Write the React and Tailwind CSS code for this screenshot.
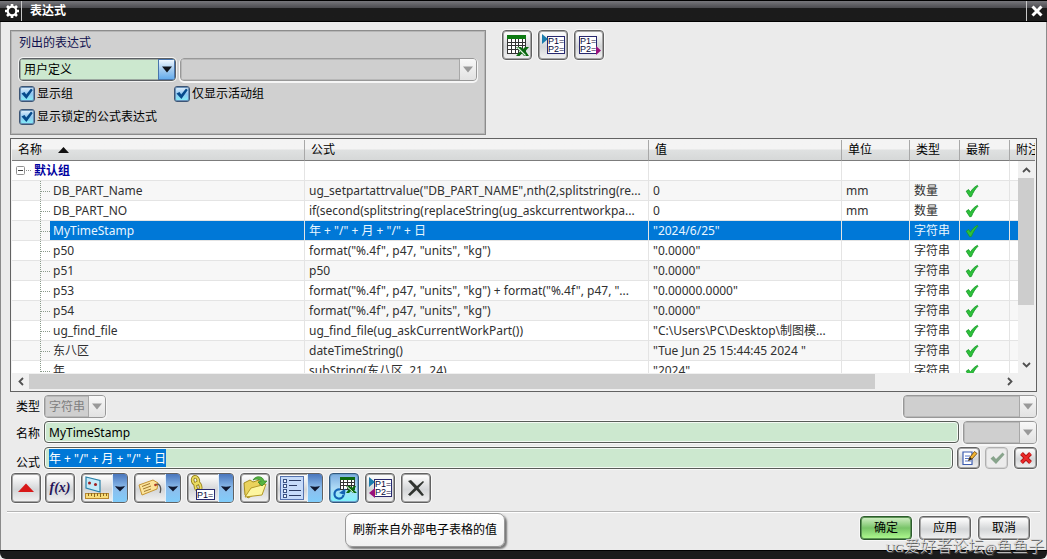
import { useEffect, useRef } from "react";

const COLUMNS = [
  { label: "名称", width: "w-[293px]" },
  { label: "公式", width: "" },
  { label: "值", width: "w-[193px]" },
  { label: "单位", width: "w-[68px]" },
  { label: "类型", width: "w-[50px]" },
  { label: "最新", width: "w-[50px]" },
  { label: "附注", width: "w-[25px]" },
];

const ROWS = [
  { name: "DB_PART_Name", formula: 'ug_setpartattrvalue("DB_PART_NAME",nth(2,splitstring(re...', value: "0", unit: "mm", type: "数量" },
  { name: "DB_PART_NO", formula: "if(second(splitstring(replaceString(ug_askcurrentworkpa...", value: "0", unit: "mm", type: "数量" },
  { name: "MyTimeStamp", formula: '年 + "/" + 月 + "/" + 日', value: '"2024/6/25"', unit: "", type: "字符串", selected: true },
  { name: "p50", formula: 'format("%.4f", p47, "units", "kg")', value: '"0.0000"', unit: "", type: "字符串" },
  { name: "p51", formula: "p50", value: '"0.0000"', unit: "", type: "字符串" },
  { name: "p53", formula: 'format("%.4f", p47, "units", "kg") + format("%.4f", p47, "...', value: '"0.00000.0000"', unit: "", type: "字符串" },
  { name: "p54", formula: 'format("%.4f", p47, "units", "kg")', value: '"0.0000"', unit: "", type: "字符串" },
  { name: "ug_find_file", formula: "ug_find_file(ug_askCurrentWorkPart())", value: '"C:\\Users\\PC\\Desktop\\制图模...', unit: "", type: "字符串" },
  { name: "东八区", formula: "dateTimeString()", value: '"Tue Jun 25 15:44:45 2024 "', unit: "", type: "字符串" },
  { name: "年", formula: "subString(东八区, 21, 24)", value: '"2024"', unit: "", type: "字符串" },
];

const glass =
  "border border-[#626262] rounded-[4px] bg-linear-to-b from-[#fafafa] from-10% via-[#d4d6d8] via-55% to-[#f2f2f2] shadow-[inset_0_0_0_1px_#a4a4a4,0_0_0_1px_#f8f8f8]";

const field =
  "min-w-0 flex-1 h-[22px] rounded-[4px] border border-[#585c58] bg-[#cce8cf] px-1 leading-[18px] shadow-[inset_0_0_0_1px_#f4faf4,0_0_0_1px_#f8f8f8]";

function CheckMark() {
  return (
    <svg width="14" height="14" viewBox="0 0 14 14" className="block">
      <path d="M1.2 7.2 L3.6 5.6 L5.4 8.2 C7 5.4 9.2 3 12.4 1.4 L13 2.2 C10 5 8 8.4 6.4 12.4 L4.8 12.8 Z" fill="#2ec23a" stroke="#189a2b" strokeWidth="0.9" strokeLinejoin="round" />
    </svg>
  );
}

function Arrow({ color }) {
  return (
    <svg width="10" height="7" viewBox="0 0 10 7" className="block">
      <path d="M0 0.5 H10 L5 6.5 Z" fill={color} />
    </svg>
  );
}

function Checkbox({ label }) {
  return (
    <label className="flex items-center gap-[2px]">
      <span className="grid">
        <input type="checkbox" defaultChecked className="col-start-1 row-start-1 size-4 appearance-none rounded-[3px] border border-[#3c5474] bg-linear-to-b from-[#e6f2fc] via-[#8fc6f0] to-[#7ff0f8] shadow-[inset_0_0_0_1px_#6890b8]" />
        <svg width="16" height="16" viewBox="0 0 16 16" className="pointer-events-none col-start-1 row-start-1">
          <path d="M2.5 7.5 L5.5 6 L7.2 8.6 L12 2.5 L13.8 4 L7.4 13 Z" fill="#064a8c" />
        </svg>
      </span>
      {label}
    </label>
  );
}

function DisabledSelect({ label, text, className }) {
  return (
    <span className={`grid h-[23px] overflow-hidden rounded-[4px] border border-[#989898] bg-[#cfcfcf] shadow-[0_1px_0_1px_#f6f6f6] ${className}`}>
      <select disabled aria-label={label} className="col-start-1 row-start-1 w-full appearance-none pl-1 leading-[21px] text-[#808080] shadow-[inset_0_0_0_1px_#b8b8b8]">
        <option>{text}</option>
      </select>
      <span className="pointer-events-none col-start-1 row-start-1 flex w-[17px] items-center justify-center self-stretch justify-self-end border-l border-[#a8a8a8] bg-linear-to-b from-[#f8f8f8] to-[#e2e2e2]">
        <Arrow color="#999999" />
      </span>
    </span>
  );
}

function ToolButton({ label, children, active }) {
  return (
    <button
      type="button"
      aria-label={label}
      className={
        active
          ? "flex size-[30px] items-center justify-center rounded-[4px] border border-[#34587c] bg-linear-to-b from-[#7cacdf] via-[#aedaf5] to-[#7af4fc] shadow-[inset_0_0_0_1px_#6ba0cc,0_0_0_1px_#f8f8f8]"
          : `flex size-[30px] items-center justify-center ${glass}`
      }
    >
      {children}
    </button>
  );
}

function SplitButton({ label, children }) {
  return (
    <span className={`flex h-[30px] w-[47px] overflow-hidden ${glass}`}>
      <button type="button" aria-label={label} className="flex flex-1 items-center justify-center">
        {children}
      </button>
      <button type="button" aria-label={`${label}菜单`} className="flex w-[15px] items-center justify-center border-l border-[#dfeefa] bg-linear-to-b from-[#4a76bc] via-[#8dbdec] to-[#80ccfa]">
        <svg width="10" height="7" viewBox="0 0 10 7">
          <path d="M0 1 C3 2 7 2 10 1 C8 4 6 5 5 6.4 C4 5 2 4 0 1 Z" fill="#101830" />
        </svg>
      </button>
    </span>
  );
}

function SheetIcon() {
  return (
    <svg width="26" height="26" viewBox="0 0 26 26">
      <rect x="3" y="3" width="19" height="4" fill="#0d7a12" />
      <rect x="3" y="7" width="19" height="15" fill="#fff" />
      <path d="M3.5 7V22 M7.5 7V22 M11.5 7V22 M14.5 7V22 M18.5 7V22 M21.5 7V22 M3 10.5H22 M3 13.5H22 M3 17.5H22 M3 21.5H22" stroke="#333" fill="none" />
      <path d="M12 15 H17 L19 17 L21 15 H25 L21.5 19 L25 24 H20 L18 21.5 L15.5 24 H12 L16 19.5 Z" fill="#0b6a10" />
      <path d="M13.5 15.5 L21.5 23.5" stroke="#e4f4e4" strokeWidth="1.1" />
    </svg>
  );
}

function ParamIcon({ left, right, leftLow }) {
  return (
    <svg width="26" height="26" viewBox="0 0 26 26">
      <rect x={right ? 3.5 : 7.5} y="4.5" width="17" height="17" fill="#fff" stroke="#28286e" />
      <text x={right ? 4 : 8} y="12" fontSize="9" fontFamily="Liberation Sans, sans-serif" fill="#08083a">P1=</text>
      <text x={right ? 4 : 8} y="20" fontSize="9" fontFamily="Liberation Sans, sans-serif" fill="#08083a">P2=</text>
      {left && <path d="M2 2 L8 7 L2 12 Z" fill="#1c7cac" />}
      {right && <path d="M20 14 L25 18.5 L20 23 Z" fill="#98107c" />}
      {leftLow && <path d="M8 13 L2 18 L8 23 Z" fill="#98107c" />}
    </svg>
  );
}

function MeasureIcon() {
  return (
    <svg width="28" height="26" viewBox="0 0 28 26">
      <path d="M3 2 L17 5.5 V17 L3 13 Z" fill="#c4eaf8" stroke="#2880a8" strokeWidth="1.2" />
      <circle cx="6.5" cy="8" r="1.5" fill="#a02020" />
      <circle cx="12.5" cy="9.5" r="1.5" fill="#a02020" />
      <rect x="2.5" y="18.5" width="23" height="5" fill="#f8dc78" stroke="#b88830" />
      <path d="M5.5 18V21 M8.5 18V21 M11.5 18V22 M14.5 18V21 M17.5 18V22 M20.5 18V21 M23.5 18V21" stroke="#8c6820" />
    </svg>
  );
}

function TagIcon() {
  return (
    <svg width="28" height="26" viewBox="0 0 28 26">
      <path d="M3 10 L17 5 L22 8 L21 14 L6 20 Z" fill="#fbe39a" stroke="#c49434" />
      <path d="M6 11.5 L14 8.5 M7 14 L15 11 M8 16.5 L15 14" stroke="#a07830" />
      <path d="M19 10 C23 7 26 12 24 18" stroke="#555" fill="none" strokeWidth="1.3" />
      <circle cx="19.5" cy="10" r="1.3" fill="#b43a20" />
    </svg>
  );
}

function LinkParamIcon() {
  return (
    <svg width="28" height="28" viewBox="0 0 28 28">
      <g fill="none" stroke="#96801c" strokeWidth="3.6">
        <ellipse cx="6.5" cy="6.5" rx="2.8" ry="3.8" transform="rotate(-15 6.5 6.5)" />
        <ellipse cx="9" cy="12.5" rx="2.5" ry="4" transform="rotate(-15 9 12.5)" />
      </g>
      <g fill="none" stroke="#eadb60" strokeWidth="1.8">
        <ellipse cx="6.5" cy="6.5" rx="2.8" ry="3.8" transform="rotate(-15 6.5 6.5)" />
        <ellipse cx="9" cy="12.5" rx="2.5" ry="4" transform="rotate(-15 9 12.5)" />
      </g>
      <rect x="7.5" y="15.5" width="18" height="10" fill="#fff" stroke="#28286e" />
      <text x="8" y="24" fontSize="9" fontFamily="Liberation Sans, sans-serif" fill="#08083a">P1=</text>
    </svg>
  );
}

function FolderIcon() {
  return (
    <svg width="26" height="26" viewBox="0 0 26 26">
      <path d="M2 8 L8 5 L11 7 L17 5 L19 16 L6 23 L3 20 Z" fill="#ead25c" stroke="#a48c20" />
      <path d="M3 22 L9 13 L24 9 L20 20 Z" fill="#fdf6a0" stroke="#b49a28" />
      <path d="M11 5 C14 0 21 1 22 6 L25 6 L20 11 L16 7 L19 6.5 C18 4 14 3.5 11 5 Z" fill="#56b440" stroke="#2c8420" strokeWidth="0.7" />
    </svg>
  );
}

function ListIcon() {
  return (
    <svg width="28" height="26" viewBox="0 0 28 26">
      <rect x="2.5" y="1.5" width="23" height="23" fill="#c6dbfa" stroke="#5674b0" />
      {[5, 10, 15, 20].map((y) => (
        <g key={y}>
          <rect x="5.5" y={y - 0.5} width="3" height="3" fill="#e8f2ff" stroke="#3c5484" />
          <path d={`M11 ${y + 0.5} H${y === 10 ? 19 : 23}`} stroke="#2c3c64" />
        </g>
      ))}
    </svg>
  );
}

function RefreshSheetIcon() {
  return (
    <svg width="26" height="26" viewBox="0 0 26 26">
      <rect x="9" y="2" width="15" height="3" fill="#0d6a12" />
      <rect x="9" y="5" width="15" height="10" fill="#fff" />
      <path d="M9.5 5V15 M12.5 5V15 M16.5 5V15 M20.5 5V15 M23.5 5V15 M9 7.5H24 M9 10.5H24 M9 14.5H20" stroke="#333" fill="none" />
      <path d="M15 11 H19 L21 13 L22.5 11 H25 L23 15 L26 18 H22 L20 16 L18 18 H15 L18 14 Z" fill="#0b6a10" />
      <path d="M16 11.5 L22.5 17.5" stroke="#e4f4e4" />
      <path d="M9 14.5 A4.6 4.6 0 1 0 12.6 20" stroke="#1464b4" fill="none" strokeWidth="2.2" />
      <path d="M8 18 L14.5 13.5 L14 20 Z" fill="#1464b4" />
    </svg>
  );
}

function FormulaInput() {
  const ref = useRef(null);
  useEffect(() => {
    ref.current.focus();
    ref.current.select();
  }, []);
  return (
    <input
      id="formula"
      ref={ref}
      defaultValue={'年 + "/" + 月 + "/" + 日'}
      className={`outline-none selection:bg-[#0078d7] selection:text-white ${field}`}
    />
  );
}

export default function App() {
  return (
    <div className="flex min-h-screen flex-col bg-[#ebebeb] font-['Noto_Sans','Noto_Sans_CJK_SC',sans-serif] text-[12px] leading-[18px] text-black">
      <header className="flex h-[22px] items-stretch border-y border-black bg-linear-to-b from-[#77777c] from-0% via-[#4c4c50] via-34% to-[#1b1b1b] to-36% text-white">
        <span className="flex w-[22px] items-center justify-center border-r border-[#c8c8c8] pl-[2px]">
          <svg width="16" height="16" viewBox="0 0 16 16">
            <g stroke="#fff" strokeWidth="2.6">
              <path d="M8 1V4 M8 12V15 M1 8H4 M12 8H15 M3 3L5 5 M11 11L13 13 M13 3L11 5 M3 13L5 11" />
              <circle cx="8" cy="8" r="4.3" fill="#1b1b1b" strokeWidth="2.2" />
            </g>
          </svg>
        </span>
        <h1 className="flex-1 pl-2 font-bold leading-[20px]">表达式</h1>
        <button type="button" aria-label="关闭" className="flex w-[21px] items-center justify-center border-l border-[#c8c8c8]">
          <svg width="14" height="14" viewBox="0 0 14 14">
            <path d="M2.5 2.5 L11.5 11.5 M11.5 2.5 L2.5 11.5" stroke="#fff" strokeWidth="3" />
          </svg>
        </button>
      </header>

      <main className="flex flex-1 flex-col border-x border-[#8a8a8a] px-[9px] pt-2">
        <div className="flex gap-4">
          <fieldset className="flex w-[476px] flex-col border border-[#8c8c8c] bg-[#d0d0d0] px-2 pb-2 pt-[2px] shadow-[inset_0_0_0_1px_#b6b6b6]">
            <legend className="float-left w-full leading-[20px] text-[#10104e]">列出的表达式</legend>
            <div className="mb-[3px] mt-[5px] flex gap-1">
              <span className="grid h-[23px] w-[157px] overflow-hidden rounded-[4px] border border-[#5c6064] bg-[#cce8cf] shadow-[0_0_0_1px_#f2f2f2]">
                <select aria-label="列出的表达式" className="col-start-1 row-start-1 w-full appearance-none pl-1 leading-[21px] shadow-[inset_0_0_0_1px_#9ca8a0]">
                  <option>用户定义</option>
                </select>
                <span className="pointer-events-none col-start-1 row-start-1 flex w-[17px] items-center justify-center self-stretch justify-self-end border border-[#4874ac] bg-linear-to-b from-[#f0f8ff] via-[#a4ccf0] to-[#64acec]">
                  <Arrow color="#10141c" />
                </span>
              </span>
              <DisabledSelect label="过滤器" text="" className="flex-1" />
            </div>
            <div className="grid grid-cols-[155px_auto] gap-y-1 leading-[19px]">
              <Checkbox label="显示组" />
              <Checkbox label="仅显示活动组" />
              <Checkbox label="显示锁定的公式表达式" />
            </div>
          </fieldset>
          <div className="flex gap-[6px]">
            <ToolButton label="电子表格编辑"><SheetIcon /></ToolButton>
            <ToolButton label="导入表达式"><ParamIcon left /></ToolButton>
            <ToolButton label="导出表达式"><ParamIcon right /></ToolButton>
          </div>
        </div>

        <section className="mt-[3px] border border-[#626262] bg-[#f2f2f2] p-px">
          <div className="grid grid-cols-[minmax(0,1fr)_17px] grid-rows-[21px_212px] overflow-hidden bg-white">
            <div className="col-span-2 col-start-1 row-span-2 row-start-1 overflow-hidden">
              <table className="w-full table-fixed border-separate border-spacing-0 text-[#303030]">
                <thead>
                  <tr className="h-[21px] text-black">
                    {COLUMNS.map((c) => (
                      <th key={c.label} scope="col" className={`${c.width} overflow-hidden whitespace-nowrap border-b border-r border-b-[#7c7c7c] border-r-[#a8a8a8] bg-linear-to-b from-[#f4f4f4] from-45% via-[#dfe1e1] via-50% to-[#d6d8d8] p-0 pl-[6px] text-left font-normal leading-[20px] last:border-r-0`}>
                        {c.label === "名称" ? (
                          <span className="flex items-center gap-4">
                            名称
                            <svg width="11" height="6" viewBox="0 0 11 6"><path d="M0 6 L5.5 0 L11 6 Z" fill="#101010" /></svg>
                          </span>
                        ) : c.label}
                      </th>
                    ))}
                  </tr>
                </thead>
                <tbody>
                  <tr className="h-5">
                    <th scope="rowgroup" className="border-b border-r border-[#e4e4e4] p-0 text-left font-bold leading-[19px] text-[#0000a0]">
                      <span className="flex items-center gap-[3px] pl-1">
                        <svg width="15" height="9" viewBox="0 0 15 9">
                          <rect x="0.5" y="0.5" width="8" height="8" rx="1" fill="#fff" stroke="#909090" />
                          <path d="M2 4.5H7" stroke="#404040" />
                          <path d="M10 4.5H15" stroke="#909090" strokeDasharray="1 1" />
                        </svg>
                        默认组
                      </span>
                    </th>
                    {COLUMNS.slice(1).map((c) => <td key={c.label} className="border-b border-r border-[#e4e4e4] p-0" />)}
                  </tr>
                  {ROWS.map((r, i) => {
                    const tone = r.selected ? "bg-[#0078d7] text-[#e8f6ff]" : i % 2 === 0 ? "bg-[#f7f7f7]" : "bg-white";
                    const cell = `overflow-hidden whitespace-nowrap border-b border-r border-[#e4e4e4] p-0 pl-1 ${tone}`;
                    return (
                      <tr key={r.name} className="h-5 leading-[19px]">
                        <td className="border-b border-r border-[#e4e4e4] p-0">
                          <span className={`flex ${i % 2 === 0 ? "bg-[#f7f7f7]" : "bg-white"}`}>
                            <svg width="38" height="19" viewBox="0 0 38 19" className="shrink-0">
                              <path d="M28.5 0V19 M29 10.5H38" stroke="#8a9a8a" strokeDasharray="1 1" fill="none" />
                            </svg>
                            <span className={`flex-1 pl-[3px] ${tone}`}>{r.name}</span>
                          </span>
                        </td>
                        <td className={cell}>{r.formula}</td>
                        <td className={cell}>{r.value}</td>
                        <td className={cell}>{r.unit}</td>
                        <td className={cell}>{r.type}</td>
                        <td className={`border-b border-r border-[#e4e4e4] p-0 pl-[5px] ${tone}`}><CheckMark /></td>
                        <td className={cell} />
                      </tr>
                    );
                  })}
                </tbody>
              </table>
            </div>
            <div className="col-start-2 row-start-2 flex flex-col bg-[#f0f0f0]">
              <span className="flex h-[17px] items-center justify-center">
                <svg width="9" height="6" viewBox="0 0 9 6"><path d="M1 5L4.5 1.5L8 5" fill="none" stroke="#505050" strokeWidth="1.8" /></svg>
              </span>
              <span className="mr-px h-[127px] bg-[#cdcdcd]" />
              <span className="mt-auto flex h-[17px] items-center justify-center">
                <svg width="9" height="6" viewBox="0 0 9 6"><path d="M1 1L4.5 4.5L8 1" fill="none" stroke="#505050" strokeWidth="1.8" /></svg>
              </span>
            </div>
          </div>
          <div className="flex h-[17px] items-stretch bg-[#f0f0f0] pr-[17px]">
            <span className="flex w-[17px] items-center justify-center">
              <svg width="6" height="9" viewBox="0 0 6 9"><path d="M5 1L1.5 4.5L5 8" fill="none" stroke="#505050" strokeWidth="1.8" /></svg>
            </span>
            <span className="flex-1"><span className="my-px block h-[15px] w-[87%] bg-[#cdcdcd]" /></span>
            <span className="flex w-[17px] items-center justify-center">
              <svg width="6" height="9" viewBox="0 0 6 9"><path d="M1 1L4.5 4.5L1 8" fill="none" stroke="#505050" strokeWidth="1.8" /></svg>
            </span>
          </div>
        </section>

        <div className="flex flex-col gap-[3px] pl-[6px] pt-[3px]">
          <div className="flex h-[23px] items-center gap-1">
            <span className="w-6">类型</span>
            <DisabledSelect label="类型" text="字符串" className="w-[62px]" />
            <DisabledSelect label="量纲" text="" className="ml-auto w-[134px]" />
          </div>
          <div className="flex h-[23px] gap-1">
            <label htmlFor="name" className="w-6 pt-1">名称</label>
            <input id="name" defaultValue="MyTimeStamp" className={field} />
            <DisabledSelect label="单位" text="" className="w-[74px]" />
          </div>
          <div className="flex h-[22px] gap-1">
            <label htmlFor="formula" className="w-6 pt-[7px]">公式</label>
            <FormulaInput />
            <div className="flex gap-[5px]">
              <button type="button" aria-label="编辑公式" className={`flex h-[22px] w-[23px] items-center justify-center ${glass}`}>
                <svg width="18" height="18" viewBox="0 0 18 18">
                  <path d="M3 3H12V15.5H3Z" fill="#fff" stroke="#3c5cb0" strokeWidth="1.2" />
                  <path d="M5 7H10 M5 9.5H9 M5 12H11" stroke="#5a78c8" />
                  <path d="M8.5 11.5L10 8L14.5 2.5L17 4.5L12 10Z" fill="#f4b430" stroke="#604010" strokeWidth="0.8" />
                  <path d="M8.5 11.5L10 8L12 10Z" fill="#222" />
                </svg>
              </button>
              <button type="button" disabled aria-label="接受编辑" className="flex h-[22px] w-[23px] items-center justify-center rounded-[4px] border border-[#b0b0b0] bg-[#ececec] shadow-[inset_0_0_0_1px_#d4d4d4]">
                <svg width="16" height="16" viewBox="0 0 16 16"><path d="M1.5 8.5L4.5 6L7 9L13.5 2.5L15.5 4.5L7 14Z" fill="#88a48c" /></svg>
              </button>
              <button type="button" aria-label="拒绝编辑" className={`ml-px flex h-[22px] w-[23px] items-center justify-center ${glass}`}>
                <svg width="16" height="16" viewBox="0 0 16 16"><path d="M3.5 3.5L12.5 12.5M12.5 3.5L3.5 12.5" stroke="#b41414" strokeWidth="4" /><path d="M3.5 3.5L12.5 12.5M12.5 3.5L3.5 12.5" stroke="#ec2a2a" strokeWidth="2.2" /></svg>
              </button>
            </div>
          </div>
        </div>

        <div className="relative mt-1 flex gap-[6px] pl-px">
          <div className="flex gap-1">
            <ToolButton label="更少选项">
              <svg width="16" height="10" viewBox="0 0 16 10"><path d="M0 9L8 0.5L16 9Z" fill="#d81818" /></svg>
            </ToolButton>
            <ToolButton label="函数"><span className="font-['Liberation_Serif',serif] text-[14px] font-bold italic text-[#241458]">f(x)</span></ToolButton>
          </div>
          <SplitButton label="测量距离"><MeasureIcon /></SplitButton>
          <SplitButton label="属性"><TagIcon /></SplitButton>
          <SplitButton label="创建部件间引用"><LinkParamIcon /></SplitButton>
          <ToolButton label="打开被引用部件"><FolderIcon /></ToolButton>
          <SplitButton label="列表"><ListIcon /></SplitButton>
          <ToolButton label="刷新来自外部电子表格的值" active><RefreshSheetIcon /></ToolButton>
          <ToolButton label="更新表达式"><ParamIcon left leftLow /></ToolButton>
          <ToolButton label="删除">
            <svg width="20" height="20" viewBox="0 0 20 20"><path d="M2 3L5 2L11 8L17 3L18 4L12.5 10L18 17L16 18L10.5 12L4 18L2 16.5L8.5 10Z" fill="#303430" /></svg>
          </ToolButton>
          <div role="tooltip" className="absolute left-[335px] top-[40px] z-10 rounded-[7px] border border-[#989898] bg-linear-to-b from-white to-[#f0f0f0] px-[7px] py-[7px] leading-[18px] shadow-[2px_2px_2px_#777]">
            刷新来自外部电子表格的值
          </div>
        </div>

        <hr className="-mx-[3px] mt-2 border-t border-[#b4b4b4] shadow-[0_1px_0_#fff]" />
        <div className="flex justify-end gap-[7px] pr-[7px] pt-1">
          <button type="button" className="h-6 w-[52px] rounded-[4px] border border-[#2c5a2c] bg-linear-to-b from-[#d4f0c8] via-[#78c468] to-[#b0fc90] leading-[18px] shadow-[inset_0_0_0_1px_#5c9454,0_0_0_1px_#f8f8f8]">确定</button>
          <button type="button" className={`h-6 w-[52px] leading-[18px] ${glass}`}>应用</button>
          <button type="button" className={`h-6 w-[52px] leading-[18px] ${glass}`}>取消</button>
        </div>
      </main>
      <footer className="relative h-[9px] rounded-b-[6px] border-t border-black bg-[#1b1b1b]">
        <span className="absolute -bottom-px right-[3px] whitespace-nowrap font-['Liberation_Serif','Noto_Sans_CJK_SC',serif] text-[16px] font-light leading-[24px] text-[#d8d8d8] [text-shadow:1px_1px_0_#555]">
          <span className="text-[13px]">UG</span>爱好者论坛<span className="text-[13px]">@</span>鱼鱼子
        </span>
      </footer>
    </div>
  );
}
